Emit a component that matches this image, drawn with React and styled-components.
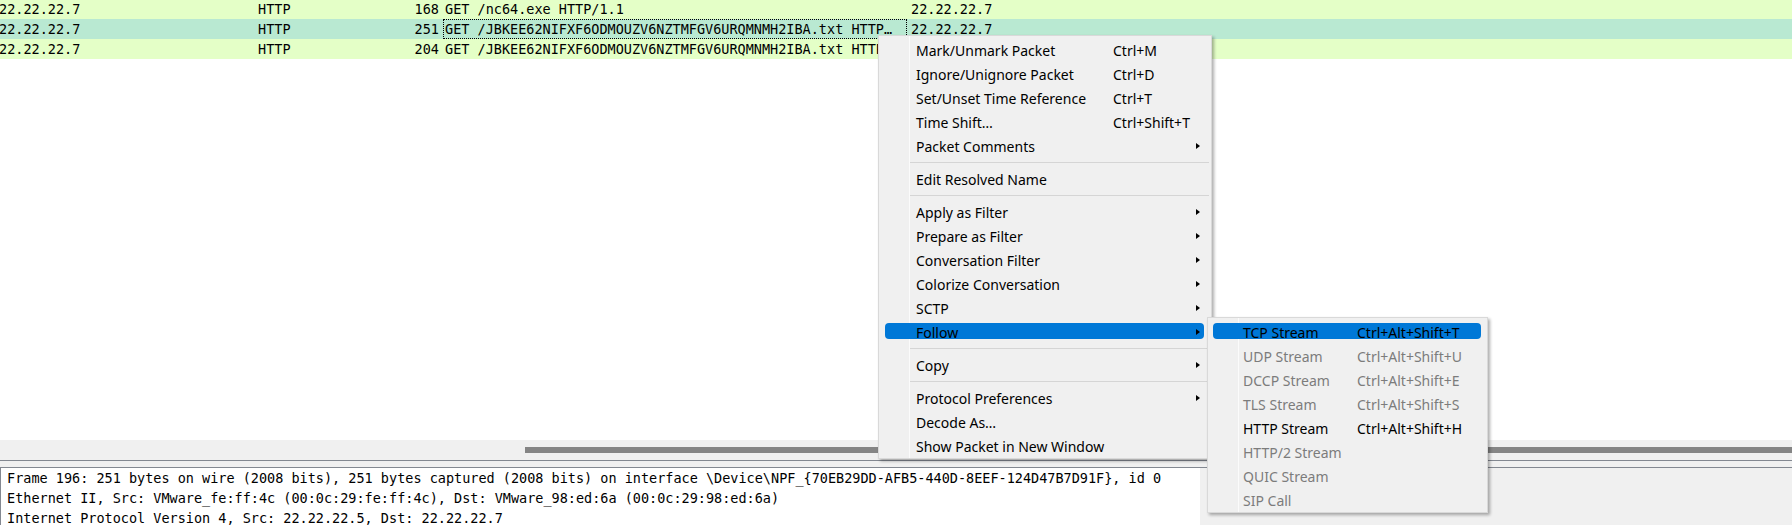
import React from 'react';
import styled, { createGlobalStyle } from 'styled-components';

const GlobalStyle = createGlobalStyle`
  html, body {
    margin: 0;
    padding: 0;
    background: #fff;
    overflow: hidden;
  }
  #root {
    width: 1792px;
    height: 525px;
  }
`;

const MONO = `"DejaVu Sans Mono", "Liberation Mono", monospace`;
const UI = `"Noto Sans", "Open Sans", sans-serif`;

const Window = styled.div`
  position: relative;
  width: 1792px;
  height: 525px;
  display: flex;
  flex-direction: column;
  background: #f0f0f0;
  overflow: hidden;
`;

const PacketList = styled.div`
  flex: 0 0 440px;
  background: #fff;
  overflow: hidden;
`;

const Rows = styled.div`
  margin-top: -1px;
`;

const Row = styled.div`
  display: flex;
  height: 20px;
  background: ${(p) => (p.$selected ? '#b9e9d2' : '#e4ffc7')};
  font-family: ${MONO};
  font-size: 13.5px;
  color: #000;
  white-space: nowrap;
`;

const Cell = styled.div`
  flex: 0 0 ${(p) => p.$w}px;
  box-sizing: border-box;
  display: flex;
  align-items: center;
  justify-content: ${(p) => (p.$right ? 'flex-end' : 'flex-start')};
  padding: 0 ${(p) => p.$pr || 0}px 0 ${(p) => p.$pl || 0}px;
  margin-left: ${(p) => p.$ml || 0}px;
  overflow: hidden;
  outline: ${(p) => (p.$focus ? '1px dotted #000' : 'none')};
  outline-offset: -1px;
`;

const HScroll = styled.div`
  flex: 0 0 21px;
  box-sizing: border-box;
  padding: 7px 0 0 525px;
  border-bottom: 1px solid #838891;
`;

const Thumb = styled.div`
  height: 6px;
  background: #858585;
`;

const SplitGap = styled.div`
  flex: 0 0 6px;
`;

const Details = styled.div`
  flex: 1;
  display: flex;
  border-top: 1px solid #838891;
`;

const Tree = styled.div`
  width: 1200px;
  box-sizing: border-box;
  background: #fff;
  border-left: 1px solid #838891;
  padding-left: 6px;
  font-family: ${MONO};
  font-size: 13.5px;
  color: #000;
`;

const TreeRow = styled.div`
  height: 20px;
  line-height: 20px;
  white-space: nowrap;
`;

const Menu = styled.div`
  position: absolute;
  left: ${(p) => p.$x}px;
  top: ${(p) => p.$y}px;
  width: ${(p) => p.$w}px;
  box-sizing: border-box;
  padding-top: 2px;
  background: #f0f0f0;
  border: 1px solid #d9d9d9;
  box-shadow: 2px 2px 3px rgba(0, 0, 0, 0.32);
  font-family: ${UI};
  font-size: 14px;

  &::before {
    content: '';
    position: absolute;
    top: 0;
    bottom: 0;
    left: 30px;
    width: 1px;
    background: #fbfbfb;
  }
`;

const Item = styled.div`
  position: relative;
  height: 24px;
  display: flex;
  align-items: center;
  padding-left: ${(p) => p.$pl}px;
  color: ${(p) => (p.$disabled ? '#7c7c7c' : '#000')};
  white-space: nowrap;

  &::before {
    content: '';
    display: ${(p) => (p.$active ? 'block' : 'none')};
    position: absolute;
    left: ${(p) => p.$hl}px;
    right: ${(p) => p.$hr}px;
    top: 3px;
    height: 16px;
    border-radius: 4px;
    background: #0078d7;
  }
`;

const Label = styled.span`
  position: relative;
  width: ${(p) => p.$w}px;
  flex-shrink: 0;
`;

const Shortcut = styled.span`
  position: relative;
  flex: 1;
`;

const Arrow = styled.span`
  position: relative;
  width: 0;
  height: 0;
  margin-right: 11px;
  border-left: 4px solid #000;
  border-top: 3.5px solid transparent;
  border-bottom: 3.5px solid transparent;
`;

const Separator = styled.div`
  height: 9px;
  display: flex;
  align-items: center;
  padding: 0 2px 0 30px;

  &::after {
    content: '';
    flex: 1;
    height: 1px;
    background: #d5d5d5;
  }
`;

const packets = [
  { len: 168, info: 'GET /nc64.exe HTTP/1.1', dst: '22.22.22.7' },
  {
    len: 251,
    info: 'GET /JBKEE62NIFXF6ODMOUZV6NZTMFGV6URQMNMH2IBA.txt HTTP…',
    dst: '22.22.22.7',
    selected: true,
  },
  {
    len: 204,
    info: 'GET /JBKEE62NIFXF6ODMOUZV6NZTMFGV6URQMNMH2IBA.txt HTTP…',
    dst: '22.22.22.7',
  },
];

const mainMenu = [
  { label: 'Mark/Unmark Packet', key: 'Ctrl+M' },
  { label: 'Ignore/Unignore Packet', key: 'Ctrl+D' },
  { label: 'Set/Unset Time Reference', key: 'Ctrl+T' },
  { label: 'Time Shift…', key: 'Ctrl+Shift+T' },
  { label: 'Packet Comments', sub: true },
  { sep: true },
  { label: 'Edit Resolved Name' },
  { sep: true },
  { label: 'Apply as Filter', sub: true },
  { label: 'Prepare as Filter', sub: true },
  { label: 'Conversation Filter', sub: true },
  { label: 'Colorize Conversation', sub: true },
  { label: 'SCTP', sub: true },
  { label: 'Follow', sub: true, active: true },
  { sep: true },
  { label: 'Copy', sub: true },
  { sep: true },
  { label: 'Protocol Preferences', sub: true },
  { label: 'Decode As…' },
  { label: 'Show Packet in New Window' },
];

const followMenu = [
  { label: 'TCP Stream', key: 'Ctrl+Alt+Shift+T', active: true },
  { label: 'UDP Stream', key: 'Ctrl+Alt+Shift+U', disabled: true },
  { label: 'DCCP Stream', key: 'Ctrl+Alt+Shift+E', disabled: true },
  { label: 'TLS Stream', key: 'Ctrl+Alt+Shift+S', disabled: true },
  { label: 'HTTP Stream', key: 'Ctrl+Alt+Shift+H' },
  { label: 'HTTP/2 Stream', disabled: true },
  { label: 'QUIC Stream', disabled: true },
  { label: 'SIP Call', disabled: true },
];

const details = [
  'Frame 196: 251 bytes on wire (2008 bits), 251 bytes captured (2008 bits) on interface \\Device\\NPF_{70EB29DD-AFB5-440D-8EEF-124D47B7D91F}, id 0',
  'Ethernet II, Src: VMware_fe:ff:4c (00:0c:29:fe:ff:4c), Dst: VMware_98:ed:6a (00:0c:29:98:ed:6a)',
  'Internet Protocol Version 4, Src: 22.22.22.5, Dst: 22.22.22.7',
];

function MenuList({ items, pl, labelW, hl, hr }) {
  return items.map((it, i) =>
    it.sep ? (
      <Separator key={i} />
    ) : (
      <Item key={i} $pl={pl} $hl={hl} $hr={hr} $active={it.active} $disabled={it.disabled}>
        <Label $w={labelW}>{it.label}</Label>
        <Shortcut>{it.key}</Shortcut>
        {it.sub && <Arrow />}
      </Item>
    )
  );
}

export default function App() {
  return (
    <>
      <GlobalStyle />
      <Window>
        <PacketList>
          <Rows>
            {packets.map((p, i) => (
              <Row key={i} $selected={p.selected}>
                <Cell $w={255} $ml={-1}>22.22.22.7</Cell>
                <Cell $w={120} $pl={4}>HTTP</Cell>
                <Cell $w={69} $right $pr={4}>{p.len}</Cell>
                <Cell $w={464} $pl={2} $focus={p.selected}>{p.info}</Cell>
                <Cell $w={200} $pl={4}>{p.dst}</Cell>
              </Row>
            ))}
          </Rows>
        </PacketList>
        <HScroll>
          <Thumb />
        </HScroll>
        <SplitGap />
        <Details>
          <Tree>
            {details.map((d, i) => (
              <TreeRow key={i}>{d}</TreeRow>
            ))}
          </Tree>
        </Details>

        <Menu $x={878} $y={35} $w={334}>
          <MenuList items={mainMenu} pl={37} labelW={197} hl={6} hr={7} />
        </Menu>
        <Menu $x={1207} $y={317} $w={281}>
          <MenuList items={followMenu} pl={35} labelW={114} hl={5} hr={6} />
        </Menu>
      </Window>
    </>
  );
}
